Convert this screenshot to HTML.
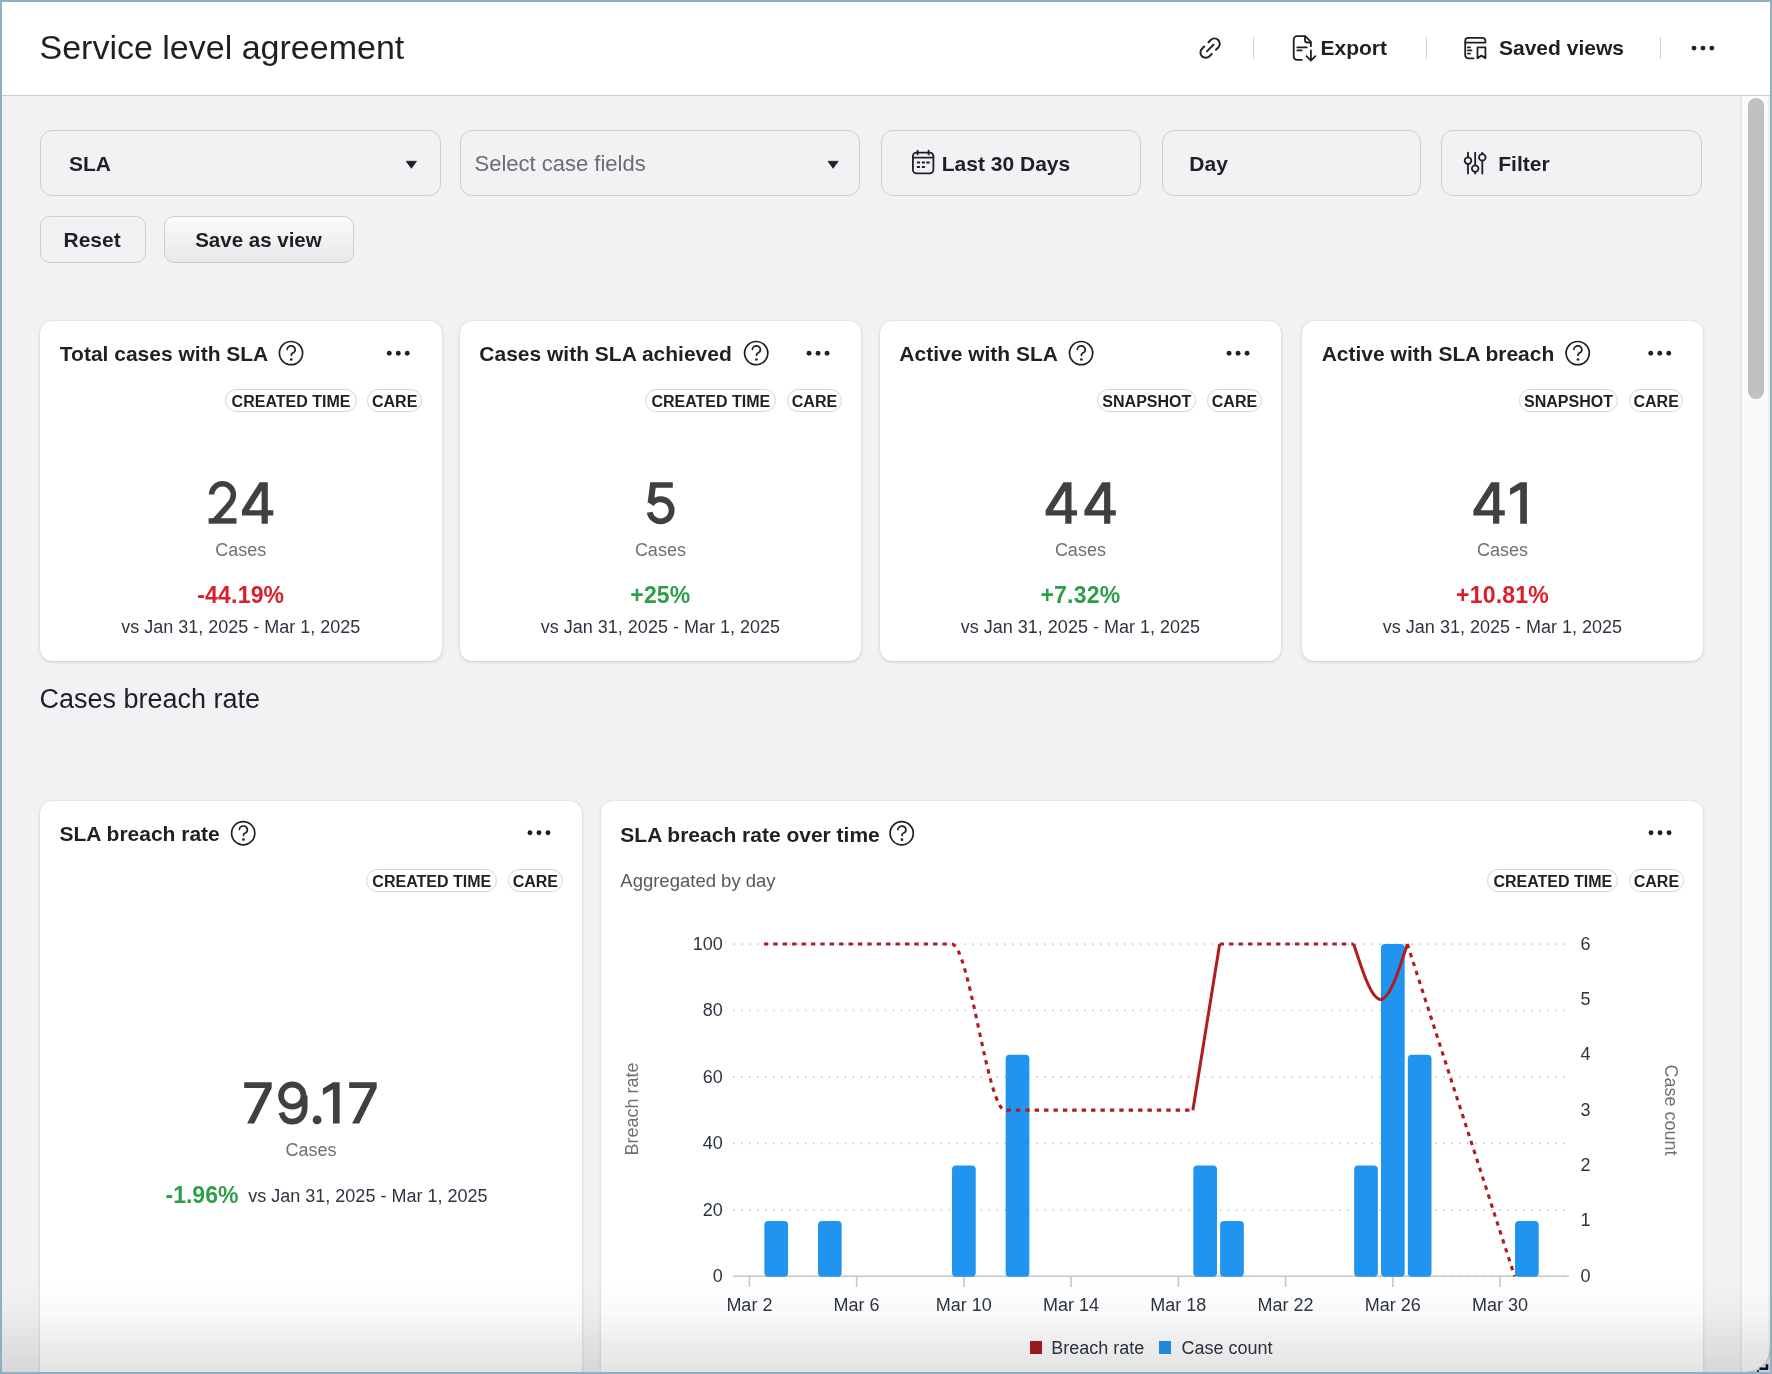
<!DOCTYPE html><html><head><meta charset="utf-8"><style>
html,body{margin:0;padding:0;width:1772px;height:1374px;overflow:hidden;background:#f2f2f5;font-family:"Liberation Sans", sans-serif}
.t{position:absolute;white-space:nowrap;font-family:"Liberation Sans", sans-serif}
.b{position:absolute}
svg.ov{position:absolute;left:0;top:0;width:1772px;height:1374px;pointer-events:none}
</style></head><body><div id="root" style="position:absolute;left:0;top:0;width:1772px;height:1374px;overflow:hidden;will-change:transform;background:#f2f2f5">
<div class="b" style="left:0.00px;top:0.00px;width:1772.00px;height:95.00px;background:#fff"></div>
<div class="b" style="left:0.00px;top:95.00px;width:1772.00px;height:1.00px;background:#cbcbcc"></div>
<div class="t" style="left:39.50px;top:30.22px;font-size:34px;line-height:34px;font-weight:400;color:#1e2026;">Service level agreement</div>
<div class="b" style="left:1253.00px;top:37.00px;width:1.20px;height:22.00px;background:#d2d2d5"></div>
<div class="b" style="left:1426.00px;top:37.00px;width:1.20px;height:22.00px;background:#d2d2d5"></div>
<div class="b" style="left:1659.90px;top:37.00px;width:1.20px;height:22.00px;background:#d2d2d5"></div>
<div class="t" style="left:1320.50px;top:36.92px;font-size:21px;line-height:21px;font-weight:700;color:#1e2026;">Export</div>
<div class="t" style="left:1499.00px;top:37.02px;font-size:21px;line-height:21px;font-weight:700;color:#1e2026;">Saved views</div>
<div class="b" style="left:40.00px;top:130.30px;width:400.50px;height:66.00px;border:1px solid #cfcfd2;border-radius:12px;box-sizing:border-box"></div>
<div class="b" style="left:460.30px;top:130.30px;width:400.00px;height:66.00px;border:1px solid #cfcfd2;border-radius:12px;box-sizing:border-box"></div>
<div class="b" style="left:880.50px;top:130.30px;width:260.80px;height:66.00px;border:1px solid #cfcfd2;border-radius:12px;box-sizing:border-box"></div>
<div class="b" style="left:1161.50px;top:130.30px;width:259.80px;height:66.00px;border:1px solid #cfcfd2;border-radius:12px;box-sizing:border-box"></div>
<div class="b" style="left:1441.40px;top:130.30px;width:260.30px;height:66.00px;border:1px solid #cfcfd2;border-radius:12px;box-sizing:border-box"></div>
<div class="t" style="left:69.00px;top:153.22px;font-size:21px;line-height:21px;font-weight:700;color:#1e2026;">SLA</div>
<div class="t" style="left:474.50px;top:152.98px;font-size:22px;line-height:22px;font-weight:400;color:#6c6c72;">Select case fields</div>
<div class="t" style="left:941.80px;top:153.02px;font-size:21px;line-height:21px;font-weight:700;color:#1e2026;">Last 30 Days</div>
<div class="t" style="left:1189.30px;top:153.02px;font-size:21px;line-height:21px;font-weight:700;color:#1e2026;">Day</div>
<div class="t" style="left:1498.30px;top:153.02px;font-size:21px;line-height:21px;font-weight:700;color:#1e2026;">Filter</div>
<div class="b" style="left:40.00px;top:216.00px;width:105.80px;height:46.50px;border:1px solid #cfcfd2;border-radius:10px;box-sizing:border-box"></div>
<div class="t" style="left:63.50px;top:229.42px;font-size:21px;line-height:21px;font-weight:700;color:#1e2026;">Reset</div>
<div class="b" style="left:164.20px;top:216.00px;width:189.80px;height:46.50px;border:1px solid #cfcfd2;border-radius:10px;box-sizing:border-box;background:linear-gradient(#fbfbfc,#e8e8ea)"></div>
<div class="t" style="left:195.20px;top:229.85px;font-size:20.5px;line-height:20.5px;font-weight:700;color:#1e2026;">Save as view</div>
<div class="b" style="left:40.00px;top:320.50px;width:401.50px;height:340.80px;background:#fff;border-radius:12px;box-shadow:0 0 1px rgba(0,0,0,0.16),0 1px 1px rgba(0,0,0,0.05),0 1px 4px rgba(0,0,0,0.11)"></div>
<div class="t" style="left:59.80px;top:343.32px;font-size:21px;line-height:21px;font-weight:700;color:#1e2026;">Total cases with SLA</div>
<div class="b" style="left:367.40px;top:389.40px;width:54.50px;height:22.40px;background:#fff;border:1px solid #d5d5d8;border-radius:12px;box-sizing:border-box"></div>
<div class="t" style="left:-5.35px;width:800px;text-align:center;top:393.86px;font-size:16px;line-height:16px;font-weight:700;color:#1e2026;">CARE</div>
<div class="b" style="left:225.40px;top:389.40px;width:131.20px;height:22.40px;background:#fff;border:1px solid #d5d5d8;border-radius:12px;box-sizing:border-box"></div>
<div class="t" style="left:-109.00px;width:800px;text-align:center;top:393.86px;font-size:16px;line-height:16px;font-weight:700;color:#1e2026;">CREATED TIME</div>
<div class="t" style="left:-159.25px;width:800px;text-align:center;top:541.06px;font-size:18px;line-height:18px;font-weight:400;color:#707074;">Cases</div>
<div class="t" style="left:-159.25px;width:800px;text-align:center;top:584.33px;font-size:23px;line-height:23px;font-weight:700;color:#d81f2a;letter-spacing:0.2px">-44.19%</div>
<div class="t" style="left:-159.25px;width:800px;text-align:center;top:617.66px;font-size:18px;line-height:18px;font-weight:400;color:#2e3441;">vs Jan 31, 2025 - Mar 1, 2025</div>
<div class="b" style="left:459.50px;top:320.50px;width:401.80px;height:340.80px;background:#fff;border-radius:12px;box-shadow:0 0 1px rgba(0,0,0,0.16),0 1px 1px rgba(0,0,0,0.05),0 1px 4px rgba(0,0,0,0.11)"></div>
<div class="t" style="left:479.30px;top:343.32px;font-size:21px;line-height:21px;font-weight:700;color:#1e2026;">Cases with SLA achieved</div>
<div class="b" style="left:787.20px;top:389.40px;width:54.50px;height:22.40px;background:#fff;border:1px solid #d5d5d8;border-radius:12px;box-sizing:border-box"></div>
<div class="t" style="left:414.45px;width:800px;text-align:center;top:393.86px;font-size:16px;line-height:16px;font-weight:700;color:#1e2026;">CARE</div>
<div class="b" style="left:645.20px;top:389.40px;width:131.20px;height:22.40px;background:#fff;border:1px solid #d5d5d8;border-radius:12px;box-sizing:border-box"></div>
<div class="t" style="left:310.80px;width:800px;text-align:center;top:393.86px;font-size:16px;line-height:16px;font-weight:700;color:#1e2026;">CREATED TIME</div>
<div class="t" style="left:260.40px;width:800px;text-align:center;top:541.06px;font-size:18px;line-height:18px;font-weight:400;color:#707074;">Cases</div>
<div class="t" style="left:260.40px;width:800px;text-align:center;top:584.33px;font-size:23px;line-height:23px;font-weight:700;color:#2c9f48;letter-spacing:0.2px">+25%</div>
<div class="t" style="left:260.40px;width:800px;text-align:center;top:617.66px;font-size:18px;line-height:18px;font-weight:400;color:#2e3441;">vs Jan 31, 2025 - Mar 1, 2025</div>
<div class="b" style="left:879.50px;top:320.50px;width:401.80px;height:340.80px;background:#fff;border-radius:12px;box-shadow:0 0 1px rgba(0,0,0,0.16),0 1px 1px rgba(0,0,0,0.05),0 1px 4px rgba(0,0,0,0.11)"></div>
<div class="t" style="left:899.30px;top:343.32px;font-size:21px;line-height:21px;font-weight:700;color:#1e2026;">Active with SLA</div>
<div class="b" style="left:1207.20px;top:389.40px;width:54.50px;height:22.40px;background:#fff;border:1px solid #d5d5d8;border-radius:12px;box-sizing:border-box"></div>
<div class="t" style="left:834.45px;width:800px;text-align:center;top:393.86px;font-size:16px;line-height:16px;font-weight:700;color:#1e2026;">CARE</div>
<div class="b" style="left:1097.20px;top:389.40px;width:99.20px;height:22.40px;background:#fff;border:1px solid #d5d5d8;border-radius:12px;box-sizing:border-box"></div>
<div class="t" style="left:746.80px;width:800px;text-align:center;top:393.86px;font-size:16px;line-height:16px;font-weight:700;color:#1e2026;">SNAPSHOT</div>
<div class="t" style="left:680.40px;width:800px;text-align:center;top:541.06px;font-size:18px;line-height:18px;font-weight:400;color:#707074;">Cases</div>
<div class="t" style="left:680.40px;width:800px;text-align:center;top:584.33px;font-size:23px;line-height:23px;font-weight:700;color:#2c9f48;letter-spacing:0.2px">+7.32%</div>
<div class="t" style="left:680.40px;width:800px;text-align:center;top:617.66px;font-size:18px;line-height:18px;font-weight:400;color:#2e3441;">vs Jan 31, 2025 - Mar 1, 2025</div>
<div class="b" style="left:1301.90px;top:320.50px;width:401.10px;height:340.80px;background:#fff;border-radius:12px;box-shadow:0 0 1px rgba(0,0,0,0.16),0 1px 1px rgba(0,0,0,0.05),0 1px 4px rgba(0,0,0,0.11)"></div>
<div class="t" style="left:1321.70px;top:343.32px;font-size:21px;line-height:21px;font-weight:700;color:#1e2026;">Active with SLA breach</div>
<div class="b" style="left:1628.90px;top:389.40px;width:54.50px;height:22.40px;background:#fff;border:1px solid #d5d5d8;border-radius:12px;box-sizing:border-box"></div>
<div class="t" style="left:1256.15px;width:800px;text-align:center;top:393.86px;font-size:16px;line-height:16px;font-weight:700;color:#1e2026;">CARE</div>
<div class="b" style="left:1518.90px;top:389.40px;width:99.20px;height:22.40px;background:#fff;border:1px solid #d5d5d8;border-radius:12px;box-sizing:border-box"></div>
<div class="t" style="left:1168.50px;width:800px;text-align:center;top:393.86px;font-size:16px;line-height:16px;font-weight:700;color:#1e2026;">SNAPSHOT</div>
<div class="t" style="left:1102.45px;width:800px;text-align:center;top:541.06px;font-size:18px;line-height:18px;font-weight:400;color:#707074;">Cases</div>
<div class="t" style="left:1102.45px;width:800px;text-align:center;top:584.33px;font-size:23px;line-height:23px;font-weight:700;color:#d81f2a;letter-spacing:0.2px">+10.81%</div>
<div class="t" style="left:1102.45px;width:800px;text-align:center;top:617.66px;font-size:18px;line-height:18px;font-weight:400;color:#2e3441;">vs Jan 31, 2025 - Mar 1, 2025</div>
<div class="t" style="left:39.50px;top:686.14px;font-size:27px;line-height:27px;font-weight:400;color:#1e2026;">Cases breach rate</div>
<div class="b" style="left:40.00px;top:801.00px;width:542.00px;height:699.00px;background:#fff;border-radius:12px;box-shadow:0 0 1px rgba(0,0,0,0.16),0 1px 1px rgba(0,0,0,0.05),0 1px 4px rgba(0,0,0,0.11)"></div>
<div class="b" style="left:601.00px;top:801.00px;width:1101.80px;height:699.00px;background:#fff;border-radius:12px;box-shadow:0 0 1px rgba(0,0,0,0.16),0 1px 1px rgba(0,0,0,0.05),0 1px 4px rgba(0,0,0,0.11)"></div>
<div class="t" style="left:59.50px;top:823.42px;font-size:21px;line-height:21px;font-weight:700;color:#1e2026;">SLA breach rate</div>
<div class="b" style="left:508.00px;top:869.20px;width:54.60px;height:22.40px;background:#fff;border:1px solid #d5d5d8;border-radius:12px;box-sizing:border-box"></div>
<div class="t" style="left:135.30px;width:800px;text-align:center;top:873.76px;font-size:16px;line-height:16px;font-weight:700;color:#1e2026;">CARE</div>
<div class="b" style="left:366.10px;top:869.20px;width:131.30px;height:22.40px;background:#fff;border:1px solid #d5d5d8;border-radius:12px;box-sizing:border-box"></div>
<div class="t" style="left:31.75px;width:800px;text-align:center;top:873.76px;font-size:16px;line-height:16px;font-weight:700;color:#1e2026;">CREATED TIME</div>
<div class="t" style="left:-89.00px;width:800px;text-align:center;top:1141.06px;font-size:18px;line-height:18px;font-weight:400;color:#707074;">Cases</div>
<div class="t" style="left:165.50px;top:1184.33px;font-size:23px;line-height:23px;font-weight:700;color:#2c9f48;">-1.96%</div>
<div class="t" style="left:248.30px;top:1186.56px;font-size:18px;line-height:18px;font-weight:400;color:#2e3441;">vs Jan 31, 2025 - Mar 1, 2025</div>
<div class="t" style="left:620.30px;top:823.52px;font-size:21px;line-height:21px;font-weight:700;color:#1e2026;">SLA breach rate over time</div>
<div class="b" style="left:1629.10px;top:869.40px;width:54.60px;height:22.20px;background:#fff;border:1px solid #d5d5d8;border-radius:12px;box-sizing:border-box"></div>
<div class="t" style="left:1256.40px;width:800px;text-align:center;top:873.76px;font-size:16px;line-height:16px;font-weight:700;color:#1e2026;">CARE</div>
<div class="b" style="left:1487.20px;top:869.40px;width:131.30px;height:22.20px;background:#fff;border:1px solid #d5d5d8;border-radius:12px;box-sizing:border-box"></div>
<div class="t" style="left:1152.85px;width:800px;text-align:center;top:873.76px;font-size:16px;line-height:16px;font-weight:700;color:#1e2026;">CREATED TIME</div>
<div class="t" style="left:620.30px;top:871.74px;font-size:18.5px;line-height:18.5px;font-weight:400;color:#55585e;">Aggregated by day</div>
<div class="t" style="left:322.80px;width:400px;text-align:right;top:1267.06px;font-size:18px;line-height:18px;font-weight:400;color:#2d3543;">0</div>
<div class="t" style="left:322.80px;width:400px;text-align:right;top:1200.61px;font-size:18px;line-height:18px;font-weight:400;color:#2d3543;">20</div>
<div class="t" style="left:322.80px;width:400px;text-align:right;top:1134.16px;font-size:18px;line-height:18px;font-weight:400;color:#2d3543;">40</div>
<div class="t" style="left:322.80px;width:400px;text-align:right;top:1067.71px;font-size:18px;line-height:18px;font-weight:400;color:#2d3543;">60</div>
<div class="t" style="left:322.80px;width:400px;text-align:right;top:1001.26px;font-size:18px;line-height:18px;font-weight:400;color:#2d3543;">80</div>
<div class="t" style="left:322.80px;width:400px;text-align:right;top:934.81px;font-size:18px;line-height:18px;font-weight:400;color:#2d3543;">100</div>
<div class="t" style="left:1580.50px;top:1266.86px;font-size:18px;line-height:18px;font-weight:400;color:#2d3543;">0</div>
<div class="t" style="left:1580.50px;top:1211.48px;font-size:18px;line-height:18px;font-weight:400;color:#2d3543;">1</div>
<div class="t" style="left:1580.50px;top:1156.10px;font-size:18px;line-height:18px;font-weight:400;color:#2d3543;">2</div>
<div class="t" style="left:1580.50px;top:1100.72px;font-size:18px;line-height:18px;font-weight:400;color:#2d3543;">3</div>
<div class="t" style="left:1580.50px;top:1045.34px;font-size:18px;line-height:18px;font-weight:400;color:#2d3543;">4</div>
<div class="t" style="left:1580.50px;top:989.96px;font-size:18px;line-height:18px;font-weight:400;color:#2d3543;">5</div>
<div class="t" style="left:1580.50px;top:934.58px;font-size:18px;line-height:18px;font-weight:400;color:#2d3543;">6</div>
<div class="t" style="left:349.40px;width:800px;text-align:center;top:1295.96px;font-size:18px;line-height:18px;font-weight:400;color:#2d3543;">Mar 2</div>
<div class="t" style="left:456.64px;width:800px;text-align:center;top:1295.96px;font-size:18px;line-height:18px;font-weight:400;color:#2d3543;">Mar 6</div>
<div class="t" style="left:563.88px;width:800px;text-align:center;top:1295.96px;font-size:18px;line-height:18px;font-weight:400;color:#2d3543;">Mar 10</div>
<div class="t" style="left:671.12px;width:800px;text-align:center;top:1295.96px;font-size:18px;line-height:18px;font-weight:400;color:#2d3543;">Mar 14</div>
<div class="t" style="left:778.36px;width:800px;text-align:center;top:1295.96px;font-size:18px;line-height:18px;font-weight:400;color:#2d3543;">Mar 18</div>
<div class="t" style="left:885.60px;width:800px;text-align:center;top:1295.96px;font-size:18px;line-height:18px;font-weight:400;color:#2d3543;">Mar 22</div>
<div class="t" style="left:992.84px;width:800px;text-align:center;top:1295.96px;font-size:18px;line-height:18px;font-weight:400;color:#2d3543;">Mar 26</div>
<div class="t" style="left:1100.08px;width:800px;text-align:center;top:1295.96px;font-size:18px;line-height:18px;font-weight:400;color:#2d3543;">Mar 30</div>
<div class="t" style="left:432px;top:1100.4px;width:400px;height:18px;line-height:18px;text-align:center;font-size:18px;color:#6d7076;transform:rotate(-90deg)">Breach rate</div>
<div class="t" style="left:1471px;top:1101px;width:400px;height:18px;line-height:18px;text-align:center;font-size:18px;color:#6d7076;transform:rotate(90deg)">Case count</div>
<div class="b" style="left:1029.90px;top:1341.00px;width:12.20px;height:12.90px;background:#a81b1e"></div>
<div class="t" style="left:1051.30px;top:1338.66px;font-size:18px;line-height:18px;font-weight:400;color:#2d3543;">Breach rate</div>
<div class="b" style="left:1159.00px;top:1341.00px;width:11.80px;height:12.90px;background:#2194f0"></div>
<div class="t" style="left:1181.50px;top:1338.66px;font-size:18px;line-height:18px;font-weight:400;color:#2d3543;">Case count</div>
<svg class="ov" width="1772" height="1374"><circle cx="1711.85" cy="48.10" r="2.45" fill="#1e2026"/><circle cx="1702.95" cy="48.10" r="2.45" fill="#1e2026"/><circle cx="1694.05" cy="48.10" r="2.45" fill="#1e2026"/><g transform="translate(1210.1,48.1) rotate(-45)" fill="none" stroke="#1e2026" stroke-width="1.9" stroke-linecap="round"><path d="M3,-5.3 H6.2 A5.3,5.3 0 0 1 6.2,5.3 H3"/><path d="M-3,-5.3 H-6.2 A5.3,5.3 0 0 0 -6.2,5.3 H-3"/><path d="M-4.6,0 H4.8"/></g><g fill="none" stroke="#1e2026" stroke-width="1.8" stroke-linecap="round" stroke-linejoin="round"><path d="M1301.7,59.9 H1297.1 A3.4,3.4 0 0 1 1293.7,56.5 V39.6 A3.4,3.4 0 0 1 1297.1,36.2 H1305.2 L1310.9,41.9 V46.2"/><path d="M1305,36.4 V40.2 A2.3,2.3 0 0 0 1307.3,42.5 H1310.7"/><path d="M1297.3,47.4 H1306.7 M1297.3,50.4 H1301.6"/><path d="M1310.9,50.3 V60.4 M1306.5,56.2 L1310.9,60.6 L1315.4,56.2"/></g><g fill="none" stroke="#1e2026" stroke-width="1.8" stroke-linecap="round" stroke-linejoin="round"><path d="M1473.5,58.3 H1468.4 A3.2,3.2 0 0 1 1465.2,55.1 V41.1 A3.2,3.2 0 0 1 1468.4,37.9 H1482.2 A3.2,3.2 0 0 1 1485.4,41.1 V42.6 H1465.2"/><path d="M1467.9,47.4 H1470 M1467.9,50.4 H1471.5 M1467.9,53.6 H1470"/><path d="M1477.5,47.4 H1485.4 V58.3 L1481.45,55.6 L1477.5,58.3 Z"/></g><path d="M406.3,161.3 H416.5 L411.4,168.3 Z" fill="#1e2026" stroke="#1e2026" stroke-width="0.8" stroke-linejoin="round"/><path d="M828,161.3 H838.2 L833.1,168.3 Z" fill="#1e2026" stroke="#1e2026" stroke-width="0.8" stroke-linejoin="round"/><g fill="none" stroke="#1e2026" stroke-width="1.8" stroke-linecap="round" stroke-linejoin="round"><rect x="912.9" y="152.6" width="20.5" height="20.7" rx="3.6"/><path d="M912.9,157.6 H933.4 M917.6,150.6 V154.4 M928.6,150.6 V154.4"/><path d="M916.9,162.4 H919.9 M921.9,162.4 H924.9 M926.2,162.4 H929.7 M916.9,166.9 H919.9 M921.9,166.9 H924.9" stroke-width="2" stroke-linecap="butt"/></g><g fill="none" stroke="#1e2026" stroke-width="1.8" stroke-linecap="round"><path d="M1468,152.6 V157.4 M1468,164 V173.6 M1475.2,152.6 V165.3 M1475.2,171.9 V173.6 M1482.3,152.6 V154.1 M1482.3,160.7 V173.6"/><circle cx="1468" cy="160.7" r="3.3"/><circle cx="1475.2" cy="168.6" r="3.3"/><circle cx="1482.3" cy="157.4" r="3.3"/></g><g transform="translate(291.00,353.10)" fill="none" stroke="#1e2026" stroke-width="1.7" stroke-linecap="round"><circle r="11.6"/><path d="M-3.8,-3.7 A4,3.6 0 0 1 4.2,-3.5 C4.2,-1.3 2.7,-0.4 1.6,0 C0.8,0.3 0.4,0.8 0.4,1.4 V2.2"/><circle cx="0.25" cy="6.4" r="1.35" fill="#1e2026" stroke="none"/></g><circle cx="407.25" cy="353.20" r="2.45" fill="#1e2026"/><circle cx="398.25" cy="353.20" r="2.45" fill="#1e2026"/><circle cx="389.25" cy="353.20" r="2.45" fill="#1e2026"/><g transform="translate(756.20,353.10)" fill="none" stroke="#1e2026" stroke-width="1.7" stroke-linecap="round"><circle r="11.6"/><path d="M-3.8,-3.7 A4,3.6 0 0 1 4.2,-3.5 C4.2,-1.3 2.7,-0.4 1.6,0 C0.8,0.3 0.4,0.8 0.4,1.4 V2.2"/><circle cx="0.25" cy="6.4" r="1.35" fill="#1e2026" stroke="none"/></g><circle cx="827.05" cy="353.20" r="2.45" fill="#1e2026"/><circle cx="818.05" cy="353.20" r="2.45" fill="#1e2026"/><circle cx="809.05" cy="353.20" r="2.45" fill="#1e2026"/><g transform="translate(1081.10,353.10)" fill="none" stroke="#1e2026" stroke-width="1.7" stroke-linecap="round"><circle r="11.6"/><path d="M-3.8,-3.7 A4,3.6 0 0 1 4.2,-3.5 C4.2,-1.3 2.7,-0.4 1.6,0 C0.8,0.3 0.4,0.8 0.4,1.4 V2.2"/><circle cx="0.25" cy="6.4" r="1.35" fill="#1e2026" stroke="none"/></g><circle cx="1247.05" cy="353.20" r="2.45" fill="#1e2026"/><circle cx="1238.05" cy="353.20" r="2.45" fill="#1e2026"/><circle cx="1229.05" cy="353.20" r="2.45" fill="#1e2026"/><g transform="translate(1577.70,353.10)" fill="none" stroke="#1e2026" stroke-width="1.7" stroke-linecap="round"><circle r="11.6"/><path d="M-3.8,-3.7 A4,3.6 0 0 1 4.2,-3.5 C4.2,-1.3 2.7,-0.4 1.6,0 C0.8,0.3 0.4,0.8 0.4,1.4 V2.2"/><circle cx="0.25" cy="6.4" r="1.35" fill="#1e2026" stroke="none"/></g><circle cx="1668.75" cy="353.20" r="2.45" fill="#1e2026"/><circle cx="1659.75" cy="353.20" r="2.45" fill="#1e2026"/><circle cx="1650.75" cy="353.20" r="2.45" fill="#1e2026"/><g transform="translate(243.20,833.20)" fill="none" stroke="#1e2026" stroke-width="1.7" stroke-linecap="round"><circle r="11.6"/><path d="M-3.8,-3.7 A4,3.6 0 0 1 4.2,-3.5 C4.2,-1.3 2.7,-0.4 1.6,0 C0.8,0.3 0.4,0.8 0.4,1.4 V2.2"/><circle cx="0.25" cy="6.4" r="1.35" fill="#1e2026" stroke="none"/></g><circle cx="547.95" cy="832.80" r="2.45" fill="#1e2026"/><circle cx="538.95" cy="832.80" r="2.45" fill="#1e2026"/><circle cx="529.95" cy="832.80" r="2.45" fill="#1e2026"/><g transform="translate(901.70,833.30)" fill="none" stroke="#1e2026" stroke-width="1.7" stroke-linecap="round"><circle r="11.6"/><path d="M-3.8,-3.7 A4,3.6 0 0 1 4.2,-3.5 C4.2,-1.3 2.7,-0.4 1.6,0 C0.8,0.3 0.4,0.8 0.4,1.4 V2.2"/><circle cx="0.25" cy="6.4" r="1.35" fill="#1e2026" stroke="none"/></g><circle cx="1669.05" cy="832.80" r="2.45" fill="#1e2026"/><circle cx="1660.05" cy="832.80" r="2.45" fill="#1e2026"/><circle cx="1651.05" cy="832.80" r="2.45" fill="#1e2026"/><line x1="733.0" y1="1276.30" x2="1566" y2="1276.30" stroke="#cbd1d5" stroke-width="1.7" stroke-dasharray="1.7 6.28" /><line x1="733.0" y1="1209.85" x2="1566" y2="1209.85" stroke="#cbd1d5" stroke-width="1.7" stroke-dasharray="1.7 6.28" /><line x1="733.0" y1="1143.40" x2="1566" y2="1143.40" stroke="#cbd1d5" stroke-width="1.7" stroke-dasharray="1.7 6.28" /><line x1="733.0" y1="1076.95" x2="1566" y2="1076.95" stroke="#cbd1d5" stroke-width="1.7" stroke-dasharray="1.7 6.28" /><line x1="733.0" y1="1010.50" x2="1566" y2="1010.50" stroke="#cbd1d5" stroke-width="1.7" stroke-dasharray="1.7 6.28" /><line x1="733.0" y1="944.05" x2="1566" y2="944.05" stroke="#cbd1d5" stroke-width="1.7" stroke-dasharray="1.7 6.28" /><line x1="734" y1="1276.3" x2="1569" y2="1276.3" stroke="#c8c8cb" stroke-width="1.6"/><line x1="749.40" y1="1276.3" x2="749.40" y2="1287" stroke="#c8c8cb" stroke-width="1.6"/><line x1="856.64" y1="1276.3" x2="856.64" y2="1287" stroke="#c8c8cb" stroke-width="1.6"/><line x1="963.88" y1="1276.3" x2="963.88" y2="1287" stroke="#c8c8cb" stroke-width="1.6"/><line x1="1071.12" y1="1276.3" x2="1071.12" y2="1287" stroke="#c8c8cb" stroke-width="1.6"/><line x1="1178.36" y1="1276.3" x2="1178.36" y2="1287" stroke="#c8c8cb" stroke-width="1.6"/><line x1="1285.60" y1="1276.3" x2="1285.60" y2="1287" stroke="#c8c8cb" stroke-width="1.6"/><line x1="1392.84" y1="1276.3" x2="1392.84" y2="1287" stroke="#c8c8cb" stroke-width="1.6"/><line x1="1500.08" y1="1276.3" x2="1500.08" y2="1287" stroke="#c8c8cb" stroke-width="1.6"/><rect x="764.36" y="1220.92" width="23.7" height="55.88" rx="4" fill="#2194f0"/><rect x="817.98" y="1220.92" width="23.7" height="55.88" rx="4" fill="#2194f0"/><rect x="952.03" y="1165.54" width="23.7" height="111.26" rx="4" fill="#2194f0"/><rect x="1005.65" y="1054.78" width="23.7" height="222.02" rx="4" fill="#2194f0"/><rect x="1193.32" y="1165.54" width="23.7" height="111.26" rx="4" fill="#2194f0"/><rect x="1220.13" y="1220.92" width="23.7" height="55.88" rx="4" fill="#2194f0"/><rect x="1354.18" y="1165.54" width="23.7" height="111.26" rx="4" fill="#2194f0"/><rect x="1380.99" y="944.02" width="23.7" height="332.78" rx="4" fill="#2194f0"/><rect x="1407.80" y="1054.78" width="23.7" height="222.02" rx="4" fill="#2194f0"/><rect x="1515.04" y="1220.92" width="23.7" height="55.88" rx="4" fill="#2194f0"/><path d="M763.91,944.05 C781.78,944.05 799.66,944.05 817.53,944.05 C862.21,944.05 906.90,944.05 951.58,944.05 C969.45,944.05 987.33,1110.17 1005.20,1110.17 C1067.76,1110.17 1130.31,1110.17 1192.87,1110.17" fill="none" stroke="#b11c1f" stroke-width="3.1" stroke-dasharray="4.4 5"/><path d="M1219.68,944.05 L1353.73,944.05" fill="none" stroke="#b11c1f" stroke-width="3.1" stroke-dasharray="4.4 5"/><path d="M1407.35,944.05 L1514.59,1276.30" fill="none" stroke="#b11c1f" stroke-width="3.1" stroke-dasharray="4.4 5"/><path d="M1192.87,1110.17 L1219.68,944.05" fill="none" stroke="#b11c1f" stroke-width="3" stroke-linejoin="round"/><path d="M1353.73,944.05 C1362.67,971.74 1371.60,999.44 1380.54,999.44 C1389.48,999.44 1398.41,971.74 1407.35,944.05" fill="none" stroke="#b11c1f" stroke-width="3" stroke-linejoin="round"/><path d="M211.65,494.6 A10.85,10.85 0 0 1 233.35,494.6 C233.35,499.4 231.2,502.6 228.2,505.6 L214,521.6" fill="none" stroke="#404042" stroke-width="5.6"/><rect x="208.6" y="518.2" width="27.9" height="5.5" fill="#404042"/><path d="M259.70,482.20 267.80,482.20 267.80,510.30 273.30,510.30 273.30,515.60 267.80,515.60 267.80,523.70 261.60,523.70 261.60,515.60 241.90,515.60 241.90,510.30 Z M261.60,490.60 261.60,510.30 249.10,510.30 Z" fill="#404042" fill-rule="evenodd"/><polygon points="650.2,482.2 672.8,482.2 672.8,487.7 655.7,487.7 654.1,500 647.6,503.3" fill="#404042"/><path d="M651.2,504.4 A11.05,11.05 0 1 1 649.7,512.3" fill="none" stroke="#404042" stroke-width="5.9"/><path d="M1063.40,482.20 1071.50,482.20 1071.50,510.30 1077.00,510.30 1077.00,515.60 1071.50,515.60 1071.50,523.70 1065.30,523.70 1065.30,515.60 1045.60,515.60 1045.60,510.30 Z M1065.30,490.60 1065.30,510.30 1052.80,510.30 Z" fill="#404042" fill-rule="evenodd"/><path d="M1102.20,482.20 1110.30,482.20 1110.30,510.30 1115.80,510.30 1115.80,515.60 1110.30,515.60 1110.30,523.70 1104.10,523.70 1104.10,515.60 1084.40,515.60 1084.40,510.30 Z M1104.10,490.60 1104.10,510.30 1091.60,510.30 Z" fill="#404042" fill-rule="evenodd"/><path d="M1491.20,482.20 1499.30,482.20 1499.30,510.30 1504.80,510.30 1504.80,515.60 1499.30,515.60 1499.30,523.70 1493.10,523.70 1493.10,515.60 1473.40,515.60 1473.40,510.30 Z M1493.10,490.60 1493.10,510.30 1480.60,510.30 Z" fill="#404042" fill-rule="evenodd"/><polygon points="1510.10,488.50 1520.20,482.20 1526.90,482.20 1526.90,523.70 1520.20,523.70 1520.20,489.40 1510.10,495.00" fill="#404042"/><polygon points="244.20,1082.20 271.70,1082.20 271.70,1087.90 254.20,1123.50 247.10,1123.50 265.10,1087.90 244.20,1087.90" fill="#404042"/><ellipse cx="292.3" cy="1095.6" rx="11.25" ry="11.1" fill="none" stroke="#404042" stroke-width="5.8"/><path d="M304.6,1095.6 V1107.5 C304.6,1116.5 299.2,1121.7 291.8,1121.7 C286.5,1121.7 283,1118.6 281.4,1112.6" fill="none" stroke="#404042" stroke-width="5.8"/><circle cx="317.1" cy="1119.9" r="4.4" fill="#404042"/><polygon points="322.90,1088.47 332.95,1082.20 339.62,1082.20 339.62,1123.50 332.95,1123.50 332.95,1089.37 322.90,1094.94" fill="#404042"/><polygon points="349.20,1082.20 376.70,1082.20 376.70,1087.90 359.20,1123.50 352.10,1123.50 370.10,1087.90 349.20,1087.90" fill="#404042"/></svg>
<div class="b" style="left:1740.00px;top:96.00px;width:30.00px;height:1278.00px;background:#fafafa"></div>
<div class="b" style="left:1740.00px;top:96.00px;width:2.00px;height:1278.00px;background:#e7e7e8"></div>
<div class="b" style="left:1768.30px;top:96.00px;width:1.70px;height:1278.00px;background:#efeff0"></div>
<div class="b" style="left:1748.00px;top:98.00px;width:16.00px;height:301.00px;background:#c1c1c1;border-radius:8px"></div>
<div class="b" style="left:0.00px;top:1280.00px;width:1772.00px;height:94.00px;background:linear-gradient(rgba(0,0,0,0) 0%,rgba(0,0,0,0.025) 35%,rgba(0,0,0,0.065) 65%,rgba(0,0,0,0.115) 100%)"></div>
<div class="b" style="left:0.00px;top:0.00px;width:0.00px;height:0.00px;"></div>
<svg class="ov" width="1772" height="1374"><path d="M1770,1349 A23,23 0 0 1 1747,1372 H1770 Z" fill="#cfcfcf"/><path d="M1770,1349 A23,23 0 0 1 1747,1372" fill="none" stroke="#b0b0b0" stroke-width="0.8"/><path d="M1759.5,1368.8 H1767 V1364.3" fill="none" stroke="#07122e" stroke-width="2.6" stroke-linejoin="round"/><circle cx="1758" cy="1371" r="1.1" fill="#07122e"/></svg>
<div class="b" style="left:0.00px;top:0.00px;width:1772.00px;height:1374.00px;box-sizing:border-box;border:2px solid #8fb0c0"></div>
</div></body></html>
